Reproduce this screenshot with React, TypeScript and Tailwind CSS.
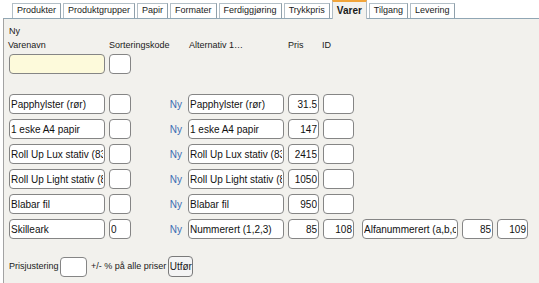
import React from "react";

const tabs = ["Produkter", "Produktgrupper", "Papir", "Formater", "Ferdiggjøring", "Trykkpris", "Varer", "Tilgang", "Levering"];

const inputCls =
  "h-[20px] rounded-[4px] border border-[#858585] px-[1px] text-[10px] text-[#111] outline-none font-['Liberation_Sans',Arial,sans-serif]";

function Field({ w, value = "", right = false, yellow = false }: { w: string; value?: string; right?: boolean; yellow?: boolean }) {
  return (
    <input
      readOnly
      value={value}
      className={`${inputCls} ${w} ${right ? "text-right" : "text-left"} ${yellow ? "bg-[#fdfadb]" : "bg-white"}`}
    />
  );
}

type Row = { name: string; sort?: string; alt: string; pris: string; id?: string; extra?: { alt: string; pris: string; id: string } };

const rows: Row[] = [
  { name: "Papphylster (rør)", alt: "Papphylster (rør)", pris: "31.5" },
  { name: "1 eske A4 papir", alt: "1 eske A4 papir", pris: "147" },
  { name: "Roll Up Lux stativ (83", alt: "Roll Up Lux stativ (83", pris: "2415" },
  { name: "Roll Up Light stativ (8", alt: "Roll Up Light stativ (8", pris: "1050" },
  { name: "Blabar fil", alt: "Blabar fil", pris: "950" },
  { name: "Skilleark", sort: "0", alt: "Nummerert (1,2,3)", pris: "85", id: "108", extra: { alt: "Alfanummerert (a,b,c)", pris: "85", id: "109" } },
];

export default function App() {
  return (
    <div className="w-[539px] h-[283px] bg-white overflow-hidden font-['Liberation_Sans',Arial,sans-serif] text-[#1a1a1a]">
      <div className="flex h-[18px] items-end pl-[12px] gap-[2px]">
        {tabs.map((t) =>
          t === "Varer" ? (
            <div
              key={t}
              className="relative z-10 -mb-[1px] flex h-[19px] items-center border-t-[2px] border-t-[#f2a53a] border-x border-x-[#b0bcc4] bg-[#f3f2ee] px-[4px] text-[10px] font-bold"
            >
              {t}
            </div>
          ) : (
            <div
              key={t}
              className="flex h-[15px] items-center border border-b-0 border-[#b3bfc7] border-r-[#8fa0ab] bg-white px-[4px] text-[9px]"
            >
              {t}
            </div>
          )
        )}
      </div>
      <div className="ml-[3px] h-[265px] border-t border-t-[#90a6b4] border-l border-l-[#a3a3a3] bg-[#f2f1ed] pl-[5px] text-[9px]">
        <div className="mt-[7px] h-[11px] leading-[11px]">Ny</div>
        <div className="mt-[3px] flex h-[11px] leading-[11px]">
          <div className="w-[101px] -ml-[1px] pl-0">Varenavn</div>
          <div className="w-[80px]">Sorteringskode</div>
          <div className="w-[99px]">Alternativ 1…</div>
          <div className="w-[34px]">Pris</div>
          <div>ID</div>
        </div>
        <div className="mt-[3px] flex gap-[4px]">
          <Field w="w-[96px]" yellow />
          <Field w="w-[22px]" />
        </div>
        <div className="mt-[20px] flex flex-col gap-[5px]">
          {rows.map((r, i) => (
            <div key={i} className="flex items-center">
              <Field w="w-[96px]" value={r.name} />
              <div className="ml-[4px]">
                <Field w="w-[22px]" value={r.sort ?? ""} />
              </div>
              <div className="w-[57px] pr-[6px] text-right text-[10px] text-[#3b6cb3]">Ny</div>
              <Field w="w-[96px]" value={r.alt} />
              <div className="ml-[4px]">
                <Field w="w-[31px]" value={r.pris} right />
              </div>
              <div className="ml-[4px]">
                <Field w="w-[31px]" value={r.id ?? ""} right />
              </div>
              {r.extra && (
                <>
                  <div className="ml-[8px]">
                    <Field w="w-[96px]" value={r.extra.alt} />
                  </div>
                  <div className="ml-[4px]">
                    <Field w="w-[31px]" value={r.extra.pris} right />
                  </div>
                  <div className="ml-[4px]">
                    <Field w="w-[31px]" value={r.extra.id} right />
                  </div>
                </>
              )}
            </div>
          ))}
        </div>
        <div className="mt-[17px] flex items-center">
          <span className="w-[51px]">Prisjustering</span>
          <Field w="w-[27px]" />
          <span className="ml-[4px]">+/- % på alle priser</span>
          <button className="ml-[2px] h-[21px] w-[25px] rounded-[4px] border border-[#7a7a7a] bg-[#f4f4f4] p-0 text-[10px]">
            Utfør
          </button>
        </div>
      </div>
    </div>
  );
}
